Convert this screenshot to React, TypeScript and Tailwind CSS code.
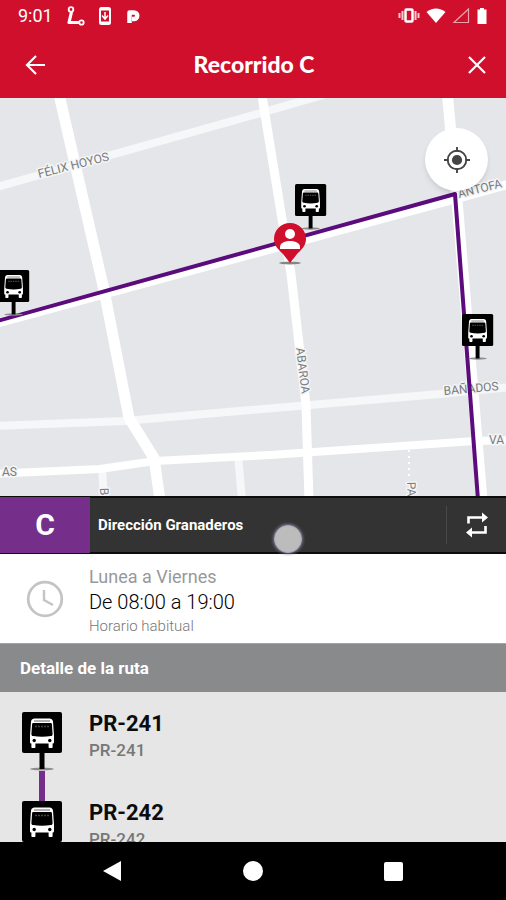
import React from "react";

type Stop = { code: string; name: string };

const stops: Stop[] = [
  { code: "PR-241", name: "PR-241" },
  { code: "PR-242", name: "PR-242" },
];

function BusSignShapes() {
  return (
    <>
      <ellipse cx="20" cy="57" rx="12" ry="1.5" fill="#8c8c8c" />
      <rect x="17.5" y="40" width="5" height="17" fill="#000" />
      <rect x="0" y="0" width="40" height="41" rx="2" fill="#000" />
      <path
        d="M12 6.500h16c1.600.4 2.800 1.400 3 3l1 14v6.500c0 1-.6 1.500-1.400 1.500V35c0 .6-.4 1-1 1h-2c-.6 0-1-.4-1-1v-3.500H13.400V35c0 .6-.4 1-1 1h-2c-.6 0-1-.4-1-1v-3.500c-.8 0-1.400-.5-1.400-1.500v-6.500l1-14c.2-1.600 1.400-2.600 3-3z"
        fill="#fff"
      />
      <path d="M12 9h16" stroke="#666" strokeWidth="1" />
      <path d="M11.500 11h17c.9 0 1.300.4 1.400 1.200l.7 10c-.1 1.200-.6 1.700-1.600 1.900-6 1-12 1-18 0-1-.2-1.500-.7-1.600-1.900l.7-10c.1-.8.500-1.200 1.400-1.200z" fill="#000" />
      <path d="M13 14.500h14" stroke="#444" strokeWidth="1.500" strokeDasharray="2 1" />
      <circle cx="12.200" cy="28.500" r="1.700" fill="#000" />
      <circle cx="27.800" cy="28.500" r="1.700" fill="#000" />
    </>
  );
}

function MapSign({ x, y }: { x: number; y: number }) {
  return (
    <g transform={`translate(${x} ${y}) scale(0.78)`}>
      <BusSignShapes />
    </g>
  );
}

function StatusBar() {
  return (
    <div className="flex h-8 items-center justify-between px-[18px] text-white">
      <div className="flex items-center gap-2.5">
        <span className="w-[38px] text-lg leading-5">9:01</span>
        <svg width="20" height="20" viewBox="0 0 20 20" fill="none" stroke="currentColor" aria-hidden="true">
          <circle cx="5" cy="3.500" r="2.300" strokeWidth="1.800" />
          <path d="M5.500 6 3 16.500h10" strokeWidth="3.200" strokeLinejoin="round" />
          <circle cx="15.500" cy="16.500" r="2.200" strokeWidth="1.800" />
        </svg>
        <svg width="20" height="20" viewBox="0 0 20 20" aria-hidden="true">
          <rect x="3" y="1" width="12" height="18" rx="2.500" fill="#fff" />
          <rect x="5" y="4.500" width="8" height="11" fill="#cf0f2c" />
          <path d="M9 6v7M6 9.500l3 3.500 3-3.500" stroke="#fff" strokeWidth="1.500" fill="none" />
        </svg>
        <svg width="16" height="20" viewBox="0 0 16 20" aria-hidden="true">
          <path d="M3.500 17V6.500H8a3 3 0 0 1 0 6.500H6" fill="none" stroke="#fff" strokeWidth="4.500" strokeLinejoin="round" />
        </svg>
      </div>
      <div className="flex items-center gap-1">
        <svg width="22" height="18" viewBox="0 0 22 18" aria-hidden="true">
          <path d="M1.500 6v5M4.500 4v9M17.500 4v9M20.500 6v5" stroke="#fff" strokeWidth="2" opacity=".8" />
          <rect x="7.500" y="2.500" width="7" height="12" rx="1" fill="none" stroke="#fff" strokeWidth="2.500" />
        </svg>
        <svg width="24" height="18" viewBox="0 0 24 18" aria-hidden="true">
          <path d="M2.500 5C8 .2 16 .2 21.500 5L12 16z" fill="#fff" />
        </svg>
        <svg width="20" height="18" viewBox="0 0 20 18" aria-hidden="true">
          <path d="M16.500 2v13.500H2z" fill="none" stroke="#fff" strokeWidth="1.200" opacity=".6" />
        </svg>
        <svg width="12" height="18" viewBox="0 0 12 18" aria-hidden="true">
          <path d="M4 1h4v1.500h2.500V17h-9V2.500H4z" fill="#fff" />
        </svg>
      </div>
    </div>
  );
}

function RouteMap() {
  return (
    <svg className="block h-full w-full" viewBox="0 98 506 398" preserveAspectRatio="xMidYMid slice" role="img" aria-label="Mapa del recorrido C">
      <rect x="-500" y="-400" width="1600" height="1400" fill="#e4e6e9" />
      <g fill="none" stroke="#f5f7f8" strokeWidth="8">
        <path d="M-10 189 250 116 330 93" />
        <path d="M-10 426 125 421 250 410 440 394 520 386" />
        <path d="M102 468 104 500M238 455 242 500" />
      </g>
      <g fill="none" stroke="#fff">
        <path d="M-10 325 455 199 520 181" strokeWidth="9" />
        <path d="M58 90 104 290 129 418 154 458 160 500" strokeWidth="11" />
        <path d="M261 90 291 274 306 405 309 500" strokeWidth="9" />
        <path d="M447 90 457 200 482 500" strokeWidth="11" />
        <path d="M-10 474 100 469 155 461 270 455 475 441 520 440" strokeWidth="8" />
        <path d="M409 450V480" strokeWidth="2" strokeDasharray="2 4" />
      </g>
      <g fontSize="12" fill="#777b80" stroke="#f4f5f6" strokeWidth="3" paintOrder="stroke" strokeLinejoin="round">
        <text transform="translate(39 178) rotate(-14)">FÉLIX HOYOS</text>
        <text transform="translate(459 198) rotate(-14)">ANTOFA</text>
        <text transform="translate(296 348) rotate(83)">ABAROA</text>
        <text transform="translate(444 395) rotate(-5)">BAÑADOS</text>
        <text x="2" y="476">AS</text>
        <text x="489" y="444">VA</text>
        <text transform="translate(100 488) rotate(88)">B</text>
        <text transform="translate(407 482) rotate(88)">PA</text>
      </g>
      <path d="M-10 323 455 194 478 500" fill="none" stroke="#5b0b7c" strokeWidth="4" strokeLinejoin="round" />
      <MapSign x={-2} y={270} />
      <MapSign x={295} y={184} />
      <MapSign x={462} y={314} />
      <ellipse cx="290" cy="263" rx="11" ry="1.500" fill="#858585" />
      <path d="M290 223c9 0 16 7 16 16 0 7-5 11-9 15l-7 9-7-9c-4-4-9-8-9-15 0-9 7-16 16-16z" fill="#cf0f2c" />
      <circle cx="290" cy="234" r="5" fill="#fff" />
      <path d="M280 249v-2c0-3.500 4-6 10-6s10 2.500 10 6v2z" fill="#fff" />
    </svg>
  );
}

export default function App() {
  return (
    <div className="flex h-screen flex-col overflow-hidden bg-black font-['Roboto',sans-serif]">
      <header className="shrink-0 bg-[#cf0f2c] text-white">
        <StatusBar />
        <div className="flex h-[66px] items-center pl-[17px] pr-[11px]">
          <button type="button" aria-label="Volver" className="flex size-9 items-center justify-center">
            <svg width="24" height="24" viewBox="0 0 24 24" fill="none" stroke="currentColor" strokeWidth="2.200" aria-hidden="true">
              <path d="M22 12H4M13 3l-9 9 9 9" />
            </svg>
          </button>
          <h1 className="flex-1 pb-0.5 pr-1 text-center font-['Lato',sans-serif] text-[23px] font-black leading-8">Recorrido C</h1>
          <button type="button" aria-label="Cerrar" className="flex size-9 items-center justify-center">
            <svg width="20" height="20" viewBox="0 0 20 20" fill="none" stroke="currentColor" strokeWidth="2.200" aria-hidden="true">
              <path d="m2 2 16 16M18 2 2 18" />
            </svg>
          </button>
        </div>
      </header>

      <main className="flex min-h-0 flex-1 flex-col">
        <section className="relative min-h-0 flex-1 overflow-hidden">
          <RouteMap />
          <button
            type="button"
            aria-label="Mi ubicación"
            className="absolute right-[18px] top-[30px] flex size-[63px] items-center justify-center rounded-full bg-white text-[#444] shadow-md"
          >
            <svg width="26" height="26" viewBox="0 0 28 28" fill="none" stroke="currentColor" strokeWidth="2" aria-hidden="true">
              <circle cx="14" cy="14" r="10" />
              <circle cx="14" cy="14" r="5.500" fill="currentColor" stroke="none" />
              <path d="M14 0v5M14 23v5M0 14h5M23 14h5" />
            </svg>
          </button>
        </section>

        <section className="relative flex h-[58px] shrink-0 items-stretch border-y-2 border-[#0c0c0c] bg-[#333] text-white">
          <div className="-my-px flex w-[90px] items-center justify-center bg-[#752f8b] text-3xl font-bold">C</div>
          <h2 className="flex flex-1 items-center pl-2 text-[15px] font-bold">Dirección Granaderos</h2>
          <button type="button" aria-label="Cambiar dirección" className="my-2 flex w-[60px] items-center justify-center border-l border-[#494949]">
            <svg width="24" height="26" viewBox="0 0 24 26" aria-hidden="true">
              <path d="M3.500 11.500V5.500H18M20.500 14v6.500H6" fill="none" stroke="#fff" strokeWidth="2.600" />
              <path d="M17 .5 23 5.500l-6 5zM7 15.500l-6 5 6 5z" fill="#fff" />
            </svg>
          </button>
          <span className="absolute left-[274px] top-[27px] size-7 rounded-full border border-[#a9a9b5] bg-[#bcbcbc] shadow-[0_0_3px_1px_#77778c]" />
        </section>

        <section className="flex h-[89px] shrink-0 items-center bg-white">
          <div className="flex w-[89px] justify-center">
            <svg width="38" height="38" viewBox="0 0 38 38" fill="none" stroke="#c4c4c4" strokeWidth="2.800" aria-hidden="true">
              <circle cx="19" cy="19" r="16.800" />
              <path d="M18 10v10l9 5" strokeWidth="2.400" />
            </svg>
          </div>
          <div className="pt-1">
            <p className="text-lg leading-6 text-[#999]">Lunea a Viernes</p>
            <p className="text-xl font-light leading-[26px] text-black">De 08:00 a 19:00</p>
            <p className="text-[15px] font-light leading-[22px] text-[#777]">Horario habitual</p>
          </div>
        </section>

        <h2 className="flex h-[49px] shrink-0 items-center border-t border-[#a5a5a5] bg-[#888a8c] px-5 pt-0.5 text-[17px] font-bold text-white">
          Detalle de la ruta
        </h2>

        <ol className="h-[150px] shrink-0 overflow-hidden bg-[#e6e6e6] pt-5">
          {stops.map((stop) => (
            <li key={stop.code} className="flex h-[89px]">
              <div className="flex w-[89px] flex-col items-center pr-[5px]">
                <svg className="block shrink-0" width="40" height="59" viewBox="0 0 40 59" aria-hidden="true">
                  <BusSignShapes />
                </svg>
                <div className="w-[6px] flex-1 bg-[#752f8b]" />
              </div>
              <div>
                <p className="text-[22px] font-bold leading-6 text-[#0c0c0c]">{stop.code}</p>
                <p className="pt-0.5 text-[17px] font-medium leading-6 text-[#777]">{stop.name}</p>
              </div>
            </li>
          ))}
        </ol>
      </main>

      <nav className="flex h-[58px] shrink-0 items-center justify-center gap-[116px] bg-black text-white">
        <button type="button" aria-label="Atrás" className="flex size-6 items-center justify-center">
          <svg width="24" height="24" viewBox="0 0 24 24" aria-hidden="true">
            <path d="M2 12 20 2v20z" fill="currentColor" />
          </svg>
        </button>
        <button type="button" aria-label="Inicio" className="flex size-6 items-center justify-center">
          <span className="size-5 rounded-full bg-white" />
        </button>
        <button type="button" aria-label="Recientes" className="flex size-6 items-center justify-center">
          <span className="size-[19px] rounded-xs bg-white" />
        </button>
      </nav>
    </div>
  );
}
